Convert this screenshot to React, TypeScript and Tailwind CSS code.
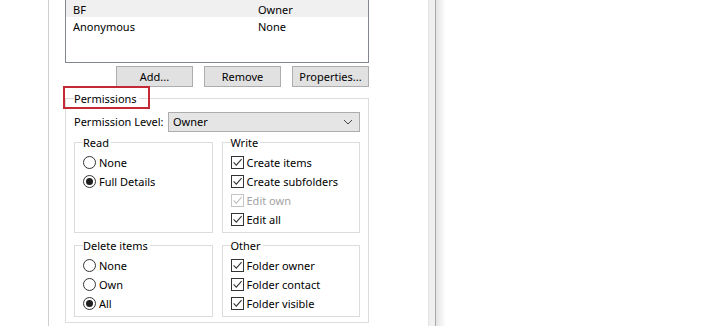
import type { ReactNode } from "react";

function CheckBox({ disabled = false }: { disabled?: boolean }) {
  return (
    <span
      className={`w-[13px] h-[13px] border bg-white flex items-center justify-center shrink-0 ${
        disabled ? "border-[#c4c4c4]" : "border-[#333333]"
      }`}
    >
      <svg width="11" height="11" viewBox="0 0 11 11">
        <path
          d="M1.6 5.4 L4.3 8.1 L9.6 2.2"
          fill="none"
          stroke={disabled ? "#bdbdbd" : "#333333"}
          strokeWidth="1.1"
        />
      </svg>
    </span>
  );
}

function Radio({ on = false }: { on?: boolean }) {
  return (
    <span className="w-[13px] h-[13px] rounded-full border border-[#333333] bg-white flex items-center justify-center shrink-0">
      {on && <span className="w-[7px] h-[7px] rounded-full bg-[#1f1f1f]" />}
    </span>
  );
}

function Option({ children, label, muted = false }: { children: ReactNode; label: string; muted?: boolean }) {
  return (
    <div className="flex items-center h-[19px] gap-[3px] whitespace-nowrap">
      {children}
      <span className={`relative top-[1px] ${muted ? "text-[#a3a3a3]" : "text-black"}`}>{label}</span>
    </div>
  );
}

function Group({ title, children }: { title: string; children: ReactNode }) {
  return (
    <fieldset className="border border-[#dcdcdc] pl-[8px] pr-[6px] pb-[3px] min-w-0">
      <legend className="pr-[2px] leading-[16px]">
        <span className="relative top-[1px]">{title}</span>
      </legend>
      <div className="pt-[3px]">{children}</div>
    </fieldset>
  );
}

const btn =
  "w-[77px] h-[21px] border border-[#adadad] bg-[#e1e1e1] flex items-center justify-center text-black pt-[1px]";

export default function App() {
  return (
    <div className="w-[702px] h-[326px] bg-white overflow-hidden flex font-['Noto_Sans',sans-serif] text-[11px] text-black whitespace-nowrap">
      <div className="w-[48px] shrink-0" />

      <div className="w-[380px] shrink-0 border-l border-[#cfcfcf] pl-[16px] bg-white">
        {/* member list, top scrolled off */}
        <div className="w-[304px] h-[63px] border-x border-b border-[#828790] bg-white">
          <div className="flex items-center h-[17px] bg-[#f0f0f0] pl-[7px] pt-[3px]">
            <span className="w-[185px]">BF</span>
            <span>Owner</span>
          </div>
          <div className="flex items-center h-[17px] pl-[7px] pt-[3px]">
            <span className="w-[185px]">Anonymous</span>
            <span>None</span>
          </div>
        </div>

        <div className="w-[304px] mt-[3px] flex justify-end gap-[11px]">
          <div className={btn}>Add...</div>
          <div className={btn}>Remove</div>
          <div className={btn}>Properties...</div>
        </div>

        <fieldset className="w-[304px] mt-[3px] border border-[#dcdcdc] pl-[8px] pr-[8px] pb-[5px]">
          <legend className="relative pr-[2px] leading-[16px]">
            <span className="relative top-[1px]">Permissions</span>
            <span className="absolute left-[-11px] top-[-4px] w-[87px] h-[23px] border-2 border-[#c32a35]" />
          </legend>

          <div className="pt-[6px] flex items-center h-[26px]">
            <span className="pt-[1px]">Permission Level:</span>
            <div className="ml-auto w-[192px] h-[20px] border border-[#adadad] bg-[#e5e5e5] flex items-center pl-[4px] pr-[6px]">
              <span className="pt-[1px]">Owner</span>
              <svg className="ml-auto" width="10" height="6" viewBox="0 0 10 6">
                <path d="M1 1 L5 5 L9 1" fill="none" stroke="#444" strokeWidth="1" />
              </svg>
            </div>
          </div>

          <div className="mt-[2px] grid grid-cols-2 gap-x-[9px] gap-y-[4px]">
            <Group title="Read">
              <Option label="None"><Radio /></Option>
              <Option label="Full Details"><Radio on /></Option>
            </Group>
            <Group title="Write">
              <Option label="Create items"><CheckBox /></Option>
              <Option label="Create subfolders"><CheckBox /></Option>
              <Option label="Edit own" muted><CheckBox disabled /></Option>
              <Option label="Edit all"><CheckBox /></Option>
            </Group>
            <Group title="Delete items">
              <Option label="None"><Radio /></Option>
              <Option label="Own"><Radio /></Option>
              <Option label="All"><Radio on /></Option>
            </Group>
            <Group title="Other">
              <Option label="Folder owner"><CheckBox /></Option>
              <Option label="Folder contact"><CheckBox /></Option>
              <Option label="Folder visible"><CheckBox /></Option>
            </Group>
          </div>
        </fieldset>
      </div>

      <div className="w-[8px] shrink-0 bg-[#f0f0f0] border-l border-[#e3e3e3] border-r border-r-[#a9a9a9]" />
      <div className="w-[10px] shrink-0 bg-gradient-to-r from-[#e4e4e4] to-white" />
    </div>
  );
}
